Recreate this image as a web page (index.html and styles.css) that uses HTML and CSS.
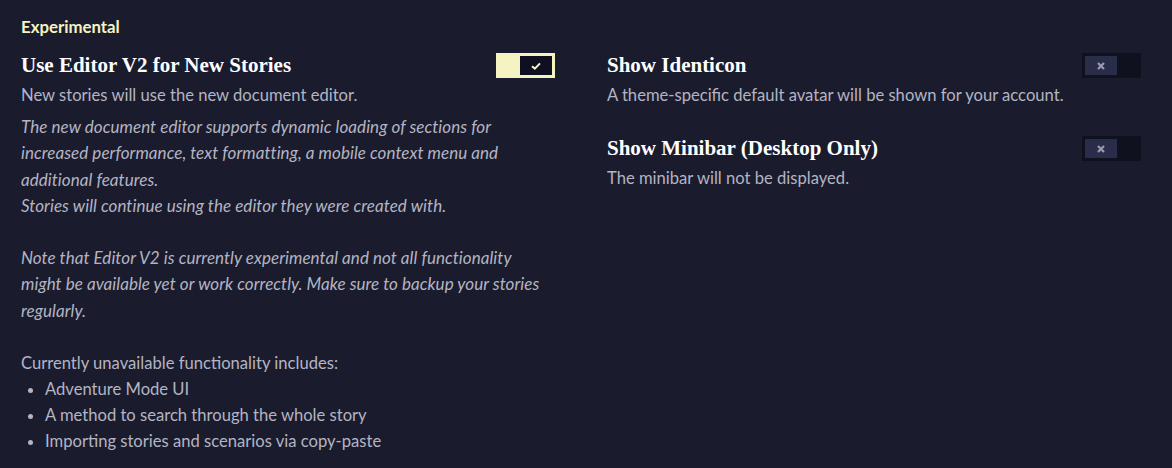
FILE: index.html
```html
<!DOCTYPE html>
<html>
<head>
<meta charset="utf-8">
<link rel="stylesheet" href="styles.css">
</head>
<body>
<div class="page">
  <div class="section-title">Experimental</div>
  <div class="columns">
    <div class="column">
      <div class="setting">
        <div class="setting-head">
          <div class="setting-title">Use Editor V2 for New Stories</div>
          <div class="toggle on"><div class="knob"><svg width="10" height="8" viewBox="0 0 10 8"><path d="M1 4.2 L3.8 6.6 L9 1.4" fill="none" stroke="#f5f3c2" stroke-width="2"/></svg></div></div>
        </div>
        <div class="desc">New stories will use the new document editor.</div>
        <div class="note">
          <p>The new document editor supports dynamic loading of sections for increased performance, text formatting, a mobile context menu and additional features.<br>Stories will continue using the editor they were created with.</p>
          <p>Note that Editor V2 is currently experimental and not all functionality might be available yet or work correctly. Make sure to backup your stories regularly.</p>
        </div>
        <div class="desc list-intro">Currently unavailable functionality includes:</div>
        <ul class="list">
          <li>Adventure Mode UI</li>
          <li>A method to search through the whole story</li>
          <li>Importing stories and scenarios via copy-paste</li>
        </ul>
      </div>
    </div>
    <div class="column">
      <div class="setting">
        <div class="setting-head">
          <div class="setting-title">Show Identicon</div>
          <div class="toggle off"><div class="knob"><svg width="10" height="10" viewBox="0 0 10 10"><path d="M2 2 L8 8 M8 2 L2 8" stroke="#9a9bb0" stroke-width="2.2"/></svg></div></div>
        </div>
        <div class="desc">A theme-specific default avatar will be shown for your account.</div>
      </div>
      <div class="setting">
        <div class="setting-head">
          <div class="setting-title">Show Minibar (Desktop Only)</div>
          <div class="toggle off"><div class="knob"><svg width="10" height="10" viewBox="0 0 10 10"><path d="M2 2 L8 8 M8 2 L2 8" stroke="#9a9bb0" stroke-width="2.2"/></svg></div></div>
        </div>
        <div class="desc">The minibar will not be displayed.</div>
      </div>
    </div>
  </div>
</div>
</body>
</html>
```
FILE: styles.css
```css
html, body {
  margin: 0;
  padding: 0;
  background: #1a1c2e;
}
body {
  font-family: "Lato", "Open Sans", sans-serif;
  font-size: 16.6px;
  color: #b4b4c2;
}
.page {
  padding: 15px 31px 0 21px;
}
.section-title {
  color: #f5f3c2;
  font-weight: 700;
  font-size: 16.8px;
  line-height: 24px;
}
.columns {
  display: grid;
  grid-template-columns: 1fr 1fr;
  column-gap: 52px;
  margin-top: 14px;
}
.setting {
  margin-bottom: 28px;
}
.setting-head {
  display: flex;
  justify-content: space-between;
  align-items: center;
  height: 25px;
}
.setting-title {
  font-family: "Liberation Serif", "DejaVu Serif", serif;
  font-weight: 700;
  font-size: 21px;
  color: #ffffff;
}
.toggle {
  width: 59px;
  height: 25px;
  box-sizing: border-box;
  padding: 3px;
  display: flex;
}
.toggle .knob {
  width: 32px;
  height: 19px;
  display: flex;
  align-items: center;
  justify-content: center;
}
.toggle.on {
  background: #f5f3c2;
  justify-content: flex-end;
}
.toggle.on .knob {
  background: #0e0f21;
}
.toggle.off {
  background: #10111f;
  justify-content: flex-start;
}
.toggle.off .knob {
  background: #2a2d49;
}
.desc {
  margin-top: 4px;
  line-height: 26px;
}
.note {
  font-style: italic;
  font-size: 17px;
  letter-spacing: 0.05px;
  line-height: 26.3px;
  margin-top: 6px;
}
.note p {
  margin: 0 0 26px 0;
}
.list-intro {
  margin-top: 0;
}
.list {
  margin: 0;
  padding-left: 24px;
  line-height: 26px;
}
```
